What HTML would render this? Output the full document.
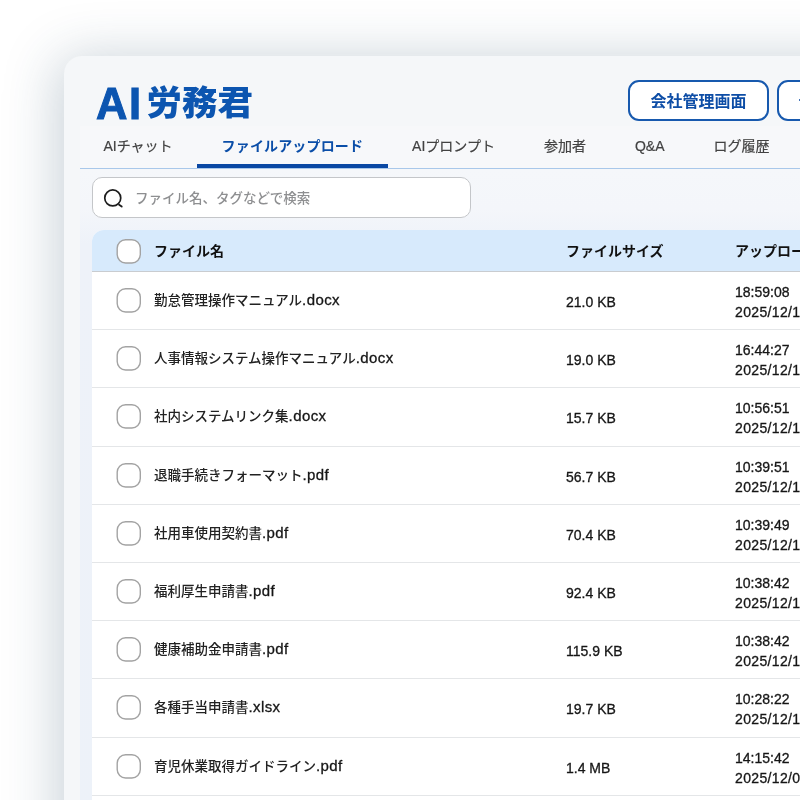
<!DOCTYPE html>
<html lang="ja">
<head>
<meta charset="utf-8">
<title>AI労務君</title>
<style>
*{box-sizing:border-box;margin:0;padding:0}
html,body{width:800px;height:800px;overflow:hidden;background:#fff}
body{font-family:"Liberation Sans","Noto Sans CJK JP",sans-serif;color:#222;font-size:14px;position:relative}
.wrap{position:absolute;left:0;top:0;width:800px;height:800px;overflow:hidden;will-change:transform}
.card{position:absolute;left:64px;top:56px;width:1000px;height:1000px;background:#f5f7f9;border-radius:18px 0 0 0;box-shadow:-4px 4px 54px 2px rgba(35,70,100,.25)}
.panel{position:absolute;left:80px;top:169px;width:800px;height:700px;background:linear-gradient(#f5f7fa 0,#f4f6fa 40px,#eef2f9 75px,#edf2f9 100%)}
.logo{position:absolute;left:0;top:0;color:#0c55b0;white-space:nowrap}
.logo b{position:absolute;left:96px;top:78.5px;font-size:43.5px;line-height:50px;font-weight:700;letter-spacing:1.5px;-webkit-text-stroke:1px #0c55b0}
.logo span{position:absolute;left:146.5px;top:75.5px;font-size:35.5px;line-height:56px;font-weight:900;display:inline-block;transform:scaleY(.95);transform-origin:50% 50%}
.btn{position:absolute;top:80px;height:41px;border:2px solid #1759ae;border-radius:11px;background:#fff;color:#0d4da6;font-weight:700;font-size:16px;line-height:40px;text-align:center;white-space:nowrap}
.b1{left:628px;width:141px}
.b2{left:777px;width:141px;text-align:left;padding-left:19px}
.tabs{position:absolute;left:80px;top:126px;height:43px;width:900px;border-bottom:1px solid #a9c8ea;background:#f7f8fa;display:flex;white-space:nowrap}
.tab{height:42px;line-height:41px;padding:0 24.5px;font-size:14px;color:#424242;position:relative;-webkit-text-stroke:.2px #424242}
.tab:first-child{padding-left:23.5px}
.tab.on{color:#0b4ea8;font-weight:700;letter-spacing:.15px;-webkit-text-stroke:0}
.tab.on:after{content:"";position:absolute;left:0;right:0;bottom:0;height:4px;background:#0a48a3}
.search{position:absolute;left:92px;top:177px;width:379px;height:41px;border:1px solid #c4c6c9;border-radius:10px;background:#fff;color:#8e8f91;font-weight:500;font-size:13.5px;line-height:41px;padding-left:42px;white-space:nowrap}
.search svg{position:absolute;left:9px;top:8px}
.table{position:absolute;left:92px;top:230px;width:900px;background:#fff;border-radius:12px 0 0 0;overflow:hidden}
.th{height:42px;background:#d7eafc;border-bottom:1px solid #c9ccd0;font-weight:700;position:relative;color:#111}
.tr{height:58.2px;border-bottom:1px solid #e4e6e8;position:relative;background:#fff}
.cb{position:absolute;left:24px;display:block}
.th .cb{top:8px}.tr .cb{top:15px}
.c1,.c2,.c3{position:absolute;white-space:nowrap}
.c1{left:62px}.c2{left:474px}.c3{left:643px}
.th .c1,.th .c2,.th .c3{top:0;line-height:42px}
.tr .c1{top:0;line-height:56px;font-size:13.5px;font-weight:500}
.c1 em{font-style:normal;font-weight:400;font-size:15px;letter-spacing:.4px}.tr .c2{top:0;line-height:60px}
.tr .c3{top:10px;line-height:20px}
.tr .c2,.tr .c3,.c1 em{color:#161616;-webkit-text-stroke:.3px #161616}
.c3 i{font-style:normal;letter-spacing:.35px}
</style>
</head>
<body>
<div class="wrap">
<div class="card"></div>
<div class="panel"></div>
<div class="logo"><b>AI</b><span>労務君</span></div>
<div class="btn b1">会社管理画面</div>
<div class="btn b2">チャット画面</div>
<div class="tabs">
<div class="tab">AIチャット</div><div class="tab on">ファイルアップロード</div><div class="tab">AIプロンプト</div><div class="tab">参加者</div><div class="tab">Q&amp;A</div><div class="tab">ログ履歴</div>
</div>
<div class="search"><svg width="24" height="24" viewBox="0 0 24 24"><circle cx="10.75" cy="11.95" r="8" fill="none" stroke="#1c1c1c" stroke-width="1.7"/><path d="M17.1 18.7 L19.7 20.6" stroke="#1c1c1c" stroke-width="1.8" stroke-linecap="round"/></svg>ファイル名、タグなどで検索</div>
<div class="table">
<div class="th"><svg class="cb" width="26" height="27" viewBox="0 0 26 27"><rect x="1.2" y="1.7" width="23.1" height="23.3" rx="8.4" fill="#fff" stroke="#a3a3a3" stroke-width="1.4"/></svg><span class="c1">ファイル名</span><span class="c2">ファイルサイズ</span><span class="c3">アップロード日時</span></div>
<div class="tr"><svg class="cb" width="26" height="27" viewBox="0 0 26 27"><rect x="1.2" y="1.7" width="23.1" height="23.3" rx="8.4" fill="#fff" stroke="#a3a3a3" stroke-width="1.4"/></svg><span class="c1">勤怠管理操作マニュアル<em>.docx</em></span><span class="c2">21.0 KB</span><span class="c3">18:59:08<br><i>2025/12/12</i></span></div>
<div class="tr"><svg class="cb" width="26" height="27" viewBox="0 0 26 27"><rect x="1.2" y="1.7" width="23.1" height="23.3" rx="8.4" fill="#fff" stroke="#a3a3a3" stroke-width="1.4"/></svg><span class="c1">人事情報システム操作マニュアル<em>.docx</em></span><span class="c2">19.0 KB</span><span class="c3">16:44:27<br><i>2025/12/12</i></span></div>
<div class="tr"><svg class="cb" width="26" height="27" viewBox="0 0 26 27"><rect x="1.2" y="1.7" width="23.1" height="23.3" rx="8.4" fill="#fff" stroke="#a3a3a3" stroke-width="1.4"/></svg><span class="c1">社内システムリンク集<em>.docx</em></span><span class="c2">15.7 KB</span><span class="c3">10:56:51<br><i>2025/12/12</i></span></div>
<div class="tr"><svg class="cb" width="26" height="27" viewBox="0 0 26 27"><rect x="1.2" y="1.7" width="23.1" height="23.3" rx="8.4" fill="#fff" stroke="#a3a3a3" stroke-width="1.4"/></svg><span class="c1">退職手続きフォーマット<em>.pdf</em></span><span class="c2">56.7 KB</span><span class="c3">10:39:51<br><i>2025/12/12</i></span></div>
<div class="tr"><svg class="cb" width="26" height="27" viewBox="0 0 26 27"><rect x="1.2" y="1.7" width="23.1" height="23.3" rx="8.4" fill="#fff" stroke="#a3a3a3" stroke-width="1.4"/></svg><span class="c1">社用車使用契約書<em>.pdf</em></span><span class="c2">70.4 KB</span><span class="c3">10:39:49<br><i>2025/12/12</i></span></div>
<div class="tr"><svg class="cb" width="26" height="27" viewBox="0 0 26 27"><rect x="1.2" y="1.7" width="23.1" height="23.3" rx="8.4" fill="#fff" stroke="#a3a3a3" stroke-width="1.4"/></svg><span class="c1">福利厚生申請書<em>.pdf</em></span><span class="c2">92.4 KB</span><span class="c3">10:38:42<br><i>2025/12/12</i></span></div>
<div class="tr"><svg class="cb" width="26" height="27" viewBox="0 0 26 27"><rect x="1.2" y="1.7" width="23.1" height="23.3" rx="8.4" fill="#fff" stroke="#a3a3a3" stroke-width="1.4"/></svg><span class="c1">健康補助金申請書<em>.pdf</em></span><span class="c2">115.9 KB</span><span class="c3">10:38:42<br><i>2025/12/12</i></span></div>
<div class="tr"><svg class="cb" width="26" height="27" viewBox="0 0 26 27"><rect x="1.2" y="1.7" width="23.1" height="23.3" rx="8.4" fill="#fff" stroke="#a3a3a3" stroke-width="1.4"/></svg><span class="c1">各種手当申請書<em>.xlsx</em></span><span class="c2">19.7 KB</span><span class="c3">10:28:22<br><i>2025/12/12</i></span></div>
<div class="tr"><svg class="cb" width="26" height="27" viewBox="0 0 26 27"><rect x="1.2" y="1.7" width="23.1" height="23.3" rx="8.4" fill="#fff" stroke="#a3a3a3" stroke-width="1.4"/></svg><span class="c1">育児休業取得ガイドライン<em>.pdf</em></span><span class="c2">1.4 MB</span><span class="c3">14:15:42<br><i>2025/12/09</i></span></div>
<div class="tr"><svg class="cb" width="26" height="27" viewBox="0 0 26 27"><rect x="1.2" y="1.7" width="23.1" height="23.3" rx="8.4" fill="#fff" stroke="#a3a3a3" stroke-width="1.4"/></svg><span class="c1">就業規則<em>.pdf</em></span><span class="c2">2.1 MB</span><span class="c3">14:10:12<br><i>2025/12/09</i></span></div>
</div>
</div>
</body>
</html>
